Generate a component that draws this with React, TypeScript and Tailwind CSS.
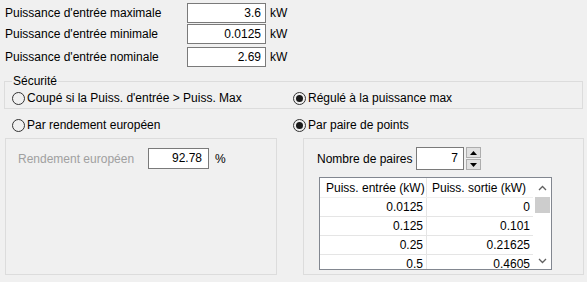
import React from "react";

const rows = [
  ["0.0125", "0"],
  ["0.125", "0.101"],
  ["0.25", "0.21625"],
  ["0.5", "0.4605"],
];

function Radio({ checked, label }: { checked?: boolean; label: string }) {
  return (
    <div className="flex items-center h-[14px]">
      <span className="w-[13px] h-[13px] rounded-full border border-[#333] bg-[#f0f0f0] flex items-center justify-center">
        {checked ? <span className="w-[7px] h-[7px] rounded-full bg-[#1a1a1a]" /> : null}
      </span>
      <span className="ml-[2px] leading-[14px]">{label}</span>
    </div>
  );
}

function Field({ label, value, top }: { label: string; value: string; top: string }) {
  return (
    <div className={`flex items-center ${top}`}>
      <span className="w-[187px] pl-[5px]">{label}</span>
      <div className="w-[79px] h-[20px] border border-[#7a7a7a] bg-white text-right pr-[4px] leading-[18px]">
        {value}
      </div>
      <span className="ml-[4px]">kW</span>
    </div>
  );
}

export default function App() {
  return (
    <div
      className="w-[587px] h-[282px] bg-[#f0f0f0] text-black text-[12px] overflow-hidden"
      style={{ fontFamily: '"Liberation Sans", Arial, sans-serif' }}
    >
      <div className="pt-[3px]">
        <Field label="Puissance d'entrée maximale" value="3.6" top="" />
        <Field label="Puissance d'entrée minimale" value="0.0125" top="mt-[1px]" />
        <Field label="Puissance d'entrée nominale" value="2.69" top="mt-[3px]" />
      </div>

      <div className="relative ml-[4px] mt-[14px] w-[579px] h-[28px] border border-[#dcdcdc] pt-[9px] pl-[7px]">
        <span className="absolute -top-[8px] left-[7px] bg-[#f0f0f0] px-[1px] leading-[14px]">
          Sécurité
        </span>
        <div className="flex">
          <div className="w-[281px]">
            <Radio label="Coupé si la Puiss. d'entrée > Puiss. Max" />
          </div>
          <Radio checked label="Régulé à la puissance max" />
        </div>
      </div>

      <div className="flex mt-[9px] pl-[12px]">
        <div className="w-[281px]">
          <Radio label="Par rendement européen" />
        </div>
        <Radio checked label="Par paire de points" />
      </div>

      <div className="flex mt-[6px] pl-[5px]">
        <div className="w-[272px] h-[137px] border border-[#dcdcdc] pt-[9px] pl-[12px]">
          <div className="flex items-center">
            <span className="w-[130px] text-[#a0a0a0]">Rendement européen</span>
            <div className="w-[61px] h-[21px] border border-[#7a7a7a] bg-white text-right pr-[6px] leading-[19px]">
              92.78
            </div>
            <span className="ml-[6px]">%</span>
          </div>
        </div>

        <div className="ml-[26px] w-[281px] h-[137px] border border-[#dcdcdc] pt-[8px] pl-[13px]">
          <div className="flex items-center">
            <span className="w-[99px]">Nombre de paires</span>
            <div className="w-[48px] h-[23px] border border-[#7a7a7a] bg-white text-right pr-[5px] leading-[21px]">
              7
            </div>
            <div className="ml-[2px] flex flex-col gap-[1px]">
              <div className="w-[15px] h-[11px] border border-[#adadad] bg-[#e1e1e1] flex items-center justify-center">
                <svg width="7" height="4" viewBox="0 0 7 4"><path d="M0 4 L3.5 0 L7 4 Z" fill="#000" /></svg>
              </div>
              <div className="w-[15px] h-[11px] border border-[#adadad] bg-[#e1e1e1] flex items-center justify-center">
                <svg width="7" height="4" viewBox="0 0 7 4"><path d="M0 0 L3.5 4 L7 0 Z" fill="#000" /></svg>
              </div>
            </div>
          </div>

          <div className="mt-[7px] ml-[2px] w-[233px] h-[93px] border border-[#828790] bg-white flex overflow-hidden">
            <div className="w-[213px]">
              <div className="flex h-[20px] border-b border-[#f0f0f0]">
                <div className="w-[107px] pl-[6px] leading-[20px] border-r border-[#e5e5e5] whitespace-nowrap overflow-hidden">Puiss. entrée (kW)</div>
                <div className="w-[106px] pl-[5px] leading-[20px] whitespace-nowrap overflow-hidden">Puiss. sortie (kW)</div>
              </div>
              {rows.map(([a, b]) => (
                <div key={a} className="flex h-[19px] border-b border-[#e5e5e5]">
                  <div className="w-[107px] text-right pr-[3px] leading-[18px] border-r border-[#e5e5e5]">{a}</div>
                  <div className="w-[106px] text-right pr-[3px] leading-[18px]">{b}</div>
                </div>
              ))}
            </div>
            <div className="w-[18px] flex flex-col items-center bg-white">
              <div className="h-[19px] w-full flex items-center justify-center">
                <svg width="9" height="6" viewBox="0 0 9 6"><path d="M1 5 L4.5 1.5 L8 5" stroke="#606060" strokeWidth="1.3" fill="none" /></svg>
              </div>
              <div className="w-[15px] h-[16px] bg-[#cdcdcd]" />
              <div className="flex-1" />
              <div className="h-[17px] w-full flex items-center justify-center">
                <svg width="9" height="6" viewBox="0 0 9 6"><path d="M1 1 L4.5 4.5 L8 1" stroke="#606060" strokeWidth="1.3" fill="none" /></svg>
              </div>
            </div>
          </div>
        </div>
      </div>
    </div>
  );
}
